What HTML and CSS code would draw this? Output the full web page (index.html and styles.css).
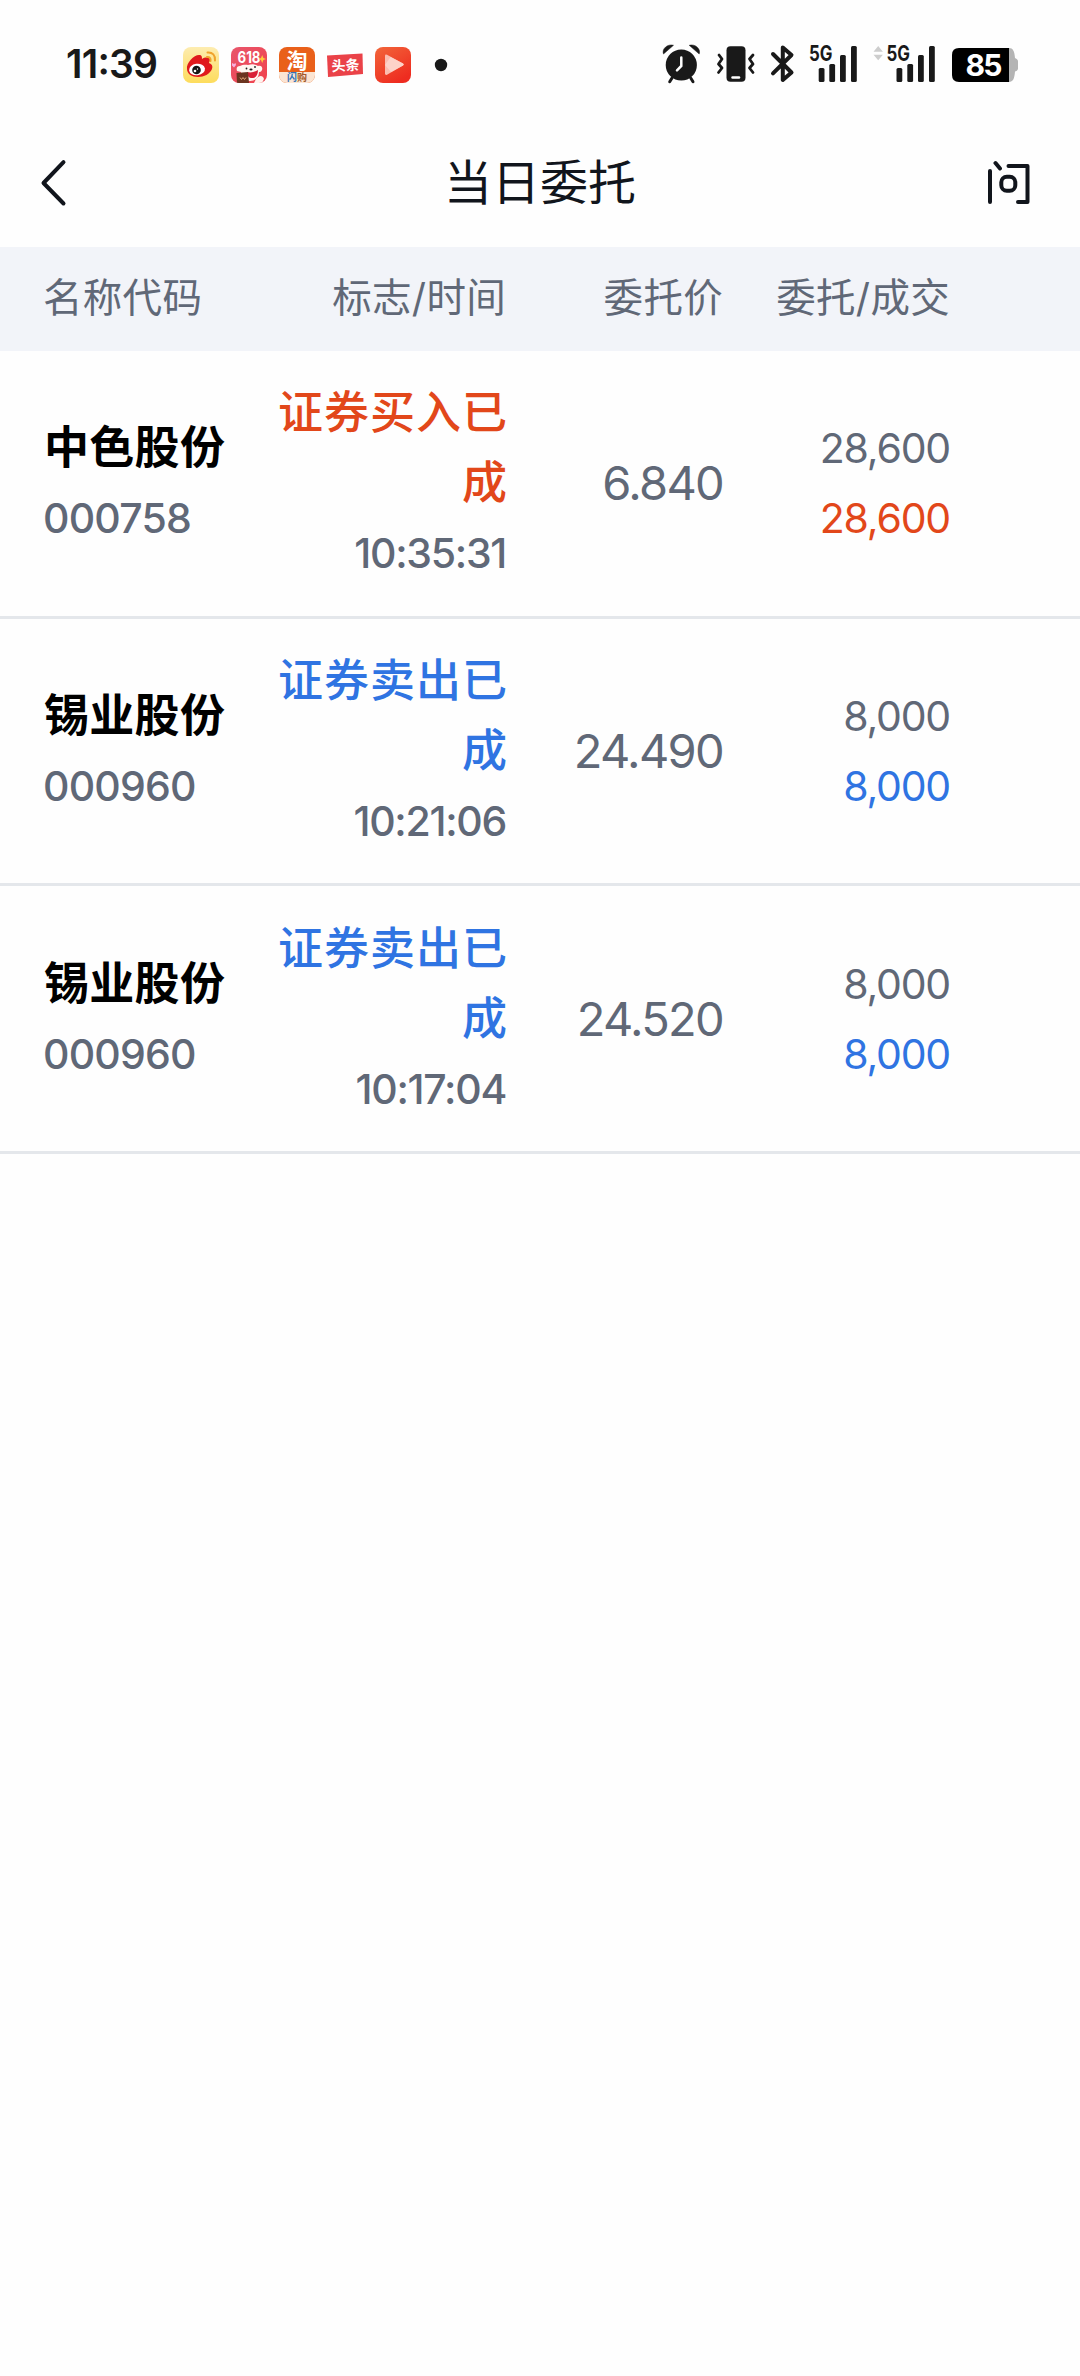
FILE: index.html
```html
<!DOCTYPE html>
<html lang="zh-CN">
<head>
<meta charset="utf-8">
<title>当日委托</title>
<link rel="stylesheet" href="styles.css">
</head>
<body>
<div class="status">
  <svg class="status-icons" viewBox="0 0 1080 130" width="1080" height="130">
    <defs>
      <linearGradient id="gy" x1="0" y1="0" x2="0" y2="1"><stop offset="0" stop-color="#fdecb0"/><stop offset="1" stop-color="#fddc5c"/></linearGradient>
      <linearGradient id="gr" x1="0" y1="0" x2="0.6" y2="1"><stop offset="0" stop-color="#f2663a"/><stop offset="1" stop-color="#ee2c20"/></linearGradient>
      <linearGradient id="gp" x1="0" y1="0" x2="1" y2="1"><stop offset="0" stop-color="#e8566c"/><stop offset="1" stop-color="#f0424c"/></linearGradient>
      <clipPath id="c2"><rect x="231" y="47" width="36" height="36" rx="8"/></clipPath>
      <clipPath id="c3"><rect x="279" y="47" width="36" height="36" rx="8"/></clipPath>
    </defs>
    <text class="clock" x="66" y="77.5" textLength="92">11:39</text>

    <rect x="183" y="47" width="36" height="36" rx="8" fill="url(#gy)"/>
    <path d="M187 69c-1-6 7-14 12-14 3 0 3 2 3 4 3-2 8-2 8 1 0 1-1 2-1 3 3 1 4 3 3 6-2 5-8 8-14 8-6 0-11-3-11-8z" fill="#e0191c"/>
    <ellipse cx="197" cy="69.500" rx="8" ry="5.800" fill="#fff" transform="rotate(-8 197 69.500)"/>
    <circle cx="196.500" cy="70" r="4.300" fill="#151515"/><circle cx="195" cy="71" r="1.300" fill="#fff"/><circle cx="197.500" cy="69" r=".7" fill="#fff"/>
    <path d="M207.500 52.500c5-.5 8 3 7.500 8M207 57c2.500-.3 4 1.500 3.500 4" fill="none" stroke="#f0a32c" stroke-width="2" stroke-linecap="round"/>

    <g clip-path="url(#c2)">
      <rect x="231" y="47" width="36" height="36" fill="url(#gp)"/>
      <text class="sale" x="237.500" y="63" textLength="23" lengthAdjust="spacingAndGlyphs">618</text>
      <path d="M261 58l1.200-3 1.200 3 2.600 1-2.600 1-1.200 3-1.200-3-2.600-1z" fill="#ffc93c"/>
      <path d="M232 63l2 1 1.500-1 .5 2-2 2.500-2-2z" fill="#f7b0df"/>
      <path d="M237 71c-1-3 0-5 3-5 2-1 5-1.500 8-1 4-1 7-1 10 1 3-1 5 1 4 4-1 2-2 2-3 2 0 6-4 9-9 9-6 0-10-4-9-9z" fill="#fff8f2"/>
      <path d="M247 72c4 1 8 0 11-2 0 5-2 8-6 8-3 0-5-2-5-6z" fill="#d92036"/>
      <circle cx="246.500" cy="68.500" r=".9" fill="#222"/><circle cx="255" cy="67" r=".9" fill="#222"/><ellipse cx="251" cy="69.500" rx="1.600" ry="1.100" fill="#222"/>
      <path d="M236.500 73l11.500-1 1 11H237z" fill="#6b3520"/>
      <path d="M240 77.500l1.500 2 1.500-2 1.500 2 1.500-2" fill="none" stroke="#e0a878" stroke-width="1"/>
      <path d="M256 79c3-4 7-4 8 0l-2 4h-8z" fill="#fff3ee"/>
    </g>

    <g clip-path="url(#c3)">
      <rect x="279" y="47" width="36" height="36" fill="#e9601a"/>
      <path d="M279 72h36v11H279z" fill="#fbe5d3"/>
      <text class="tao" x="286.500" y="68">淘</text>
      <text class="flash" x="287" y="81"><tspan fill="#3272b8">闪</tspan><tspan fill="#a55a2a">购</tspan></text>
    </g>

    <path d="M327 55.500l35.500-2 .5 20.500-35 3z" fill="#ea4248"/>
    <text class="toutiao" x="331.500" y="70.500" transform="rotate(-3 345 65)">头条</text>

    <rect x="375" y="47" width="36" height="36" rx="8" fill="url(#gr)"/>
    <path d="M385 56q0-2 2-1.200l16 8.700q1.500 1 0 2l-16 9.200q-2 .8-2-1.500z" fill="#fbbdb0"/>
    <path d="M385 65l5.500-8 12.500 6.500q1.500 1 0 2L391 72z" fill="#fdd3c9"/>
    <circle cx="441" cy="65" r="6.200" fill="#191919"/>

    <g fill="#191919" stroke="#191919">
      <circle cx="681.300" cy="65" r="15.600" stroke="none"/>
      <path d="M663.500 54c-2-5 4-10.500 10-8.700zM699.200 54c2-5-4-10.500-10-8.700z" stroke-width=".5"/>
      <path d="M672 78l-2.300 3.700M690.700 78l2.300 3.700" stroke-width="3" stroke-linecap="round"/>
      <path d="M681.300 57.500V66l-4.300 4.300" fill="none" stroke="#fff" stroke-width="2.500" stroke-linecap="round"/>
      <rect x="726.500" y="46.300" width="19" height="35.400" rx="4" stroke="none"/>
      <path d="M732.500 77.400h6.500" stroke="#fff" stroke-width="2.500" stroke-linecap="round"/>
      <path d="M719 55l3 4-3.500 5 3.500 4-3.500 4.500M753 55l-3.500 4 3.500 5-3.500 4 3.500 4.500" fill="none" stroke-width="2.800" stroke-linecap="round" stroke-linejoin="round"/>
      <path d="M773 54l18.500 18.500-8.700 7.500V47.500l8.700 7.500L773 73.300" fill="none" stroke-width="4" stroke-linecap="round" stroke-linejoin="round"/>
    </g>
    <text class="net" x="809" y="60.800" textLength="23.500" lengthAdjust="spacingAndGlyphs">5G</text>
    <text class="net" x="886.500" y="60.800" textLength="23.500" lengthAdjust="spacingAndGlyphs">5G</text>
    <g fill="#191919">
      <rect x="818.700" y="68" width="5.800" height="14" rx="1.500"/><rect x="829.300" y="64" width="5.800" height="18" rx="1.500"/><rect x="840" y="55" width="5.800" height="27" rx="1.500"/><rect x="851" y="46" width="5.800" height="36" rx="1.500"/>
      <rect x="896.500" y="68" width="5.800" height="14" rx="1.500"/><rect x="907.300" y="64" width="5.800" height="18" rx="1.500"/><rect x="918" y="55" width="5.800" height="27" rx="1.500"/><rect x="929" y="46" width="5.800" height="36" rx="1.500"/>
    </g>
    <path d="M873.500 51.800l4.700-5.800 4.700 5.800zM873.500 54.700h9.400l-4.700 5.500z" fill="#cdcdcd"/>
    <path d="M1009 48c4 0 5.500 3 6 10 2 1 3 2 3 3.500v7c0 1.500-1 2.500-3 3-.5 7-2 10.500-6 10.500z" fill="#b4b4b4"/>
    <path d="M1009 48h-50q-7 0-7 7v20q0 7 7 7h50z" fill="#000"/>
    <text class="pct" x="965.500" y="76.200" textLength="37">85</text>
  </svg>
</div>

<header class="nav">
  <svg class="nav-icon" viewBox="0 0 48 60" width="48" height="60"><path d="M30.500 9.200L10.500 30l20 20.500" fill="none" stroke="#11151c" stroke-width="4" stroke-linecap="round" stroke-linejoin="round"/></svg>
  <h1 class="title">当日委托</h1>
  <svg class="nav-icon" viewBox="0 0 48 60" width="48" height="60"><path d="M6 18v31M11.500 10l4.500 5.500M24.500 13h19v36h-9.500" fill="none" stroke="#11151c" stroke-width="4" stroke-linecap="round" stroke-linejoin="round"/><rect x="17.300" y="23.700" width="14" height="14" rx="5.500" fill="none" stroke="#11151c" stroke-width="4"/></svg>
</header>

<section class="grid head">
  <span>名称代码</span><span>标志/时间</span><span>委托价</span><span>委托/成交</span>
</section>

<section class="grid row buy">
  <div class="stock"><b>中色股份</b><span class="code">000758</span></div>
  <div class="flag"><span class="state">证券买入已成</span><span class="time">10:35:31</span></div>
  <div class="price">6.840</div>
  <div class="qty"><span>28,600</span><span class="done">28,600</span></div>
</section>
<section class="grid row sell">
  <div class="stock"><b>锡业股份</b><span class="code">000960</span></div>
  <div class="flag"><span class="state">证券卖出已成</span><span class="time">10:21:06</span></div>
  <div class="price">24.490</div>
  <div class="qty"><span>8,000</span><span class="done">8,000</span></div>
</section>
<section class="grid row sell">
  <div class="stock"><b>锡业股份</b><span class="code">000960</span></div>
  <div class="flag"><span class="state">证券卖出已成</span><span class="time">10:17:04</span></div>
  <div class="price">24.520</div>
  <div class="qty"><span>8,000</span><span class="done">8,000</span></div>
</section>
</body>
</html>
```
FILE: styles.css
```css
* { box-sizing: border-box; }
body {
  margin: 0;
  width: 1080px;
  min-height: 2376px;
  background: #fefefe;
  color: #606877;
  font-family: Inter, "Noto Sans CJK SC", sans-serif;
}
.status { height: 130px; }
.status-icons { display: block; }
.clock { font: 600 39px Inter, sans-serif; fill: #191919; }
.sale { font: 700 16px Inter, sans-serif; fill: #fff; }
.tao { font: 700 21px "Noto Sans CJK SC", sans-serif; fill: #fff; }
.flash { font: 700 10px "Noto Sans CJK SC", sans-serif; }
.toutiao { font: 700 14px "Noto Sans CJK SC", sans-serif; fill: #fff; }
.net { font: 700 21.5px Inter, sans-serif; fill: #191919; }
.pct { font: 700 30px Inter, sans-serif; fill: #fff; }

.nav {
  display: flex;
  align-items: center;
  justify-content: space-between;
  height: 117px;
  padding: 0 48px 11px 33px;
}
.nav-icon { flex: none; }
.title {
  margin: 0;
  padding-left: 15px;
  font-size: 48px;
  font-weight: 400;
  line-height: 60px;
  color: #11151c;
}

.grid {
  display: grid;
  grid-template-columns: 216px 247px 217px 227px;
  padding-left: 43px;
}
.grid > * { text-align: right; }
.grid > :first-child { text-align: left; }
.head {
  height: 104px;
  background: #f2f4f9;
  font-size: 39.5px;
  line-height: 103px;
  letter-spacing: .3px;
}
.row {
  align-items: center;
  height: 267.670px;
  border-bottom: 3px solid #e4e7eb;
  font-size: 41px;
  line-height: 70px;
}
.row span, .row b { display: block; }
.stock b { font-size: 45px; letter-spacing: .3px; padding-left: 1px; color: #000; }
.code { font-weight: 450; letter-spacing: -.8px; }
.time { font-weight: 450; letter-spacing: -1.300px; }
.state { width: 234px; margin: 0 -2px 0 auto; font-size: 45px; font-weight: 500; letter-spacing: 1px; }
.price { font-size: 47px; letter-spacing: -1.700px; }
.qty { letter-spacing: -1.200px; }
.buy .state, .buy .done { color: #e2471a; }
.sell .state, .sell .done { color: #2f74e2; }
```
